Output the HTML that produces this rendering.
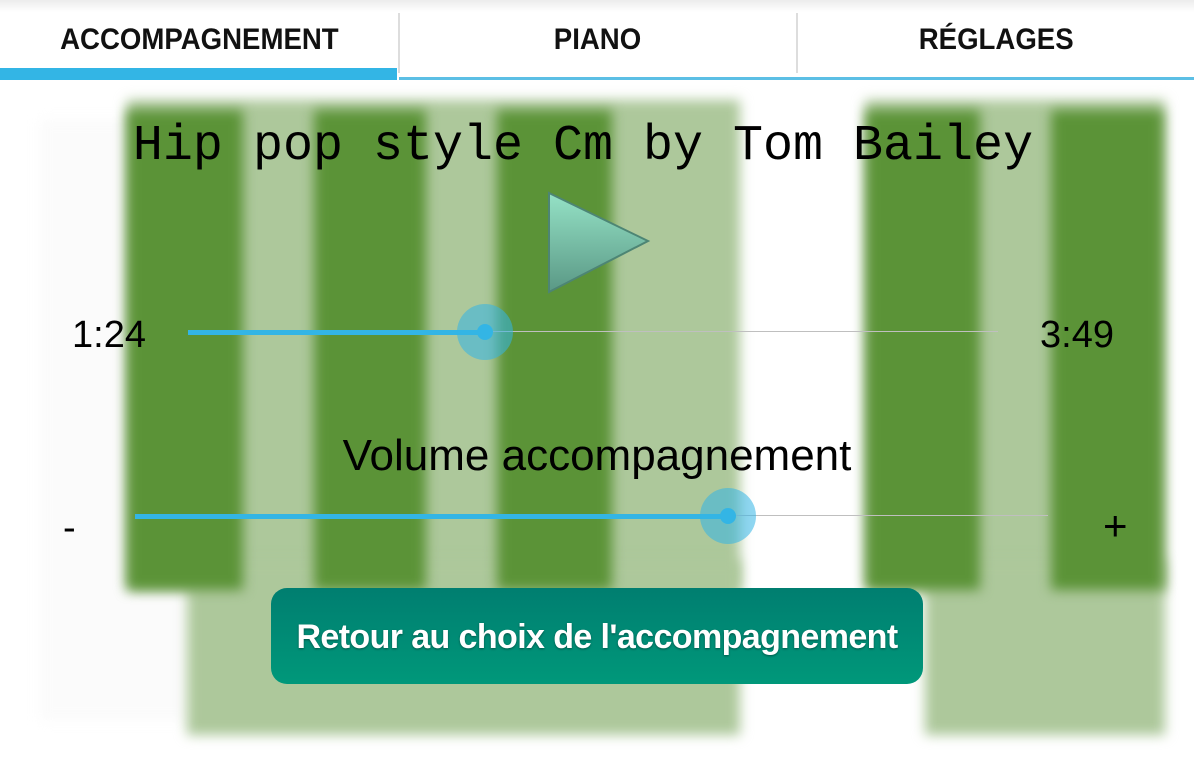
<!DOCTYPE html>
<html><head><meta charset="utf-8"><style>
*{margin:0;padding:0;box-sizing:border-box}
body{width:1194px;height:764px;overflow:hidden;background:#fff;position:relative;font-family:"Liberation Sans",sans-serif}
.a{position:absolute}
.bg{filter:blur(6px)}
.lt{background:#adc89b}
.dk{background:#5b9337}
.tab{position:absolute;top:1px;height:80px;text-align:center;font-weight:bold;font-size:30px;line-height:78px;color:#111}
.tab span{display:inline-block;transform:scaleX(0.92)}
</style></head><body>
<div class="a" style="left:0;top:0;width:1194px;height:12px;background:linear-gradient(#ececec,#fff)"></div>
<div class="a bg" style="left:40px;top:120px;width:150px;height:600px;background:#fbfbfb"></div>
<div class="a bg lt" style="left:127px;top:100px;width:613px;height:490px"></div>
<div class="a bg lt" style="left:187px;top:560px;width:553px;height:175px"></div>
<div class="a bg lt" style="left:865px;top:100px;width:300px;height:490px"></div>
<div class="a bg lt" style="left:925px;top:560px;width:240px;height:175px"></div>
<div class="a bg dk" style="left:127px;top:110px;width:116px;height:480px"></div>
<div class="a bg dk" style="left:314px;top:110px;width:112px;height:480px"></div>
<div class="a bg dk" style="left:497px;top:110px;width:115px;height:480px"></div>
<div class="a bg dk" style="left:866px;top:110px;width:114px;height:480px"></div>
<div class="a bg dk" style="left:1051px;top:110px;width:112px;height:480px"></div>

<div class="tab" style="left:0;width:398px"><span>ACCOMPAGNEMENT</span></div>
<div class="tab" style="left:399px;width:398px"><span>PIANO</span></div>
<div class="tab" style="left:798px;width:396px"><span>RÉGLAGES</span></div>
<div class="a" style="left:0;top:68px;width:397px;height:12px;background:#33b5e5"></div>
<div class="a" style="left:399px;top:77px;width:795px;height:3px;background:#5cbfe5"></div>
<div class="a" style="left:398px;top:13px;width:2px;height:60px;background:#ddd"></div>
<div class="a" style="left:796px;top:13px;width:2px;height:60px;background:#ddd"></div>

<div class="a" style="left:0;top:117px;width:1165px;text-align:center;font-family:'Liberation Mono',monospace;font-size:50px;line-height:60px;color:#000;padding-left:1px">Hip pop style Cm by Tom Bailey</div>

<svg class="a" style="left:540px;top:185px" width="120" height="115">
<defs><linearGradient id="g" x1="0" y1="0" x2="0" y2="1"><stop offset="0" stop-color="#95e2c6"/><stop offset="1" stop-color="#5a9885"/></linearGradient></defs>
<polygon points="9,8 108,56 9,107" fill="url(#g)" stroke="#4d8574" stroke-width="2"/>
</svg>

<div class="a" style="left:72px;top:314px;font-size:38px;color:#000">1:24</div>
<div class="a" style="left:1040px;top:314px;font-size:38px;color:#000">3:49</div>
<div class="a" style="left:188px;top:331px;width:810px;height:1px;background:#bfbfbf"></div>
<div class="a" style="left:188px;top:330px;width:297px;height:5px;background:#33b5e5"></div>
<div class="a" style="left:457px;top:304px;width:56px;height:56px;border-radius:50%;background:rgba(51,181,229,.55)"></div>
<div class="a" style="left:477px;top:324px;width:16px;height:16px;border-radius:50%;background:#33b5e5"></div>

<div class="a" style="left:0;top:431px;width:1194px;text-align:center;font-size:44px;color:#000">Volume accompagnement</div>
<div class="a" style="left:63px;top:507px;font-size:38px;color:#000">-</div>
<div class="a" style="left:1103px;top:502px;font-size:42px;color:#000">+</div>
<div class="a" style="left:135px;top:515px;width:913px;height:1px;background:#bfbfbf"></div>
<div class="a" style="left:135px;top:514px;width:593px;height:5px;background:#33b5e5"></div>
<div class="a" style="left:700px;top:488px;width:56px;height:56px;border-radius:50%;background:rgba(51,181,229,.55)"></div>
<div class="a" style="left:720px;top:508px;width:16px;height:16px;border-radius:50%;background:#33b5e5"></div>

<div class="a" style="left:271px;top:588px;width:652px;height:96px;border-radius:16px;background:linear-gradient(#007e70,#00987a);color:#fff;font-weight:bold;font-size:34px;line-height:98px;text-align:center;text-shadow:0 1px 2px rgba(0,0,0,.4);letter-spacing:-0.6px">Retour au choix de l'accompagnement</div>
</body></html>
